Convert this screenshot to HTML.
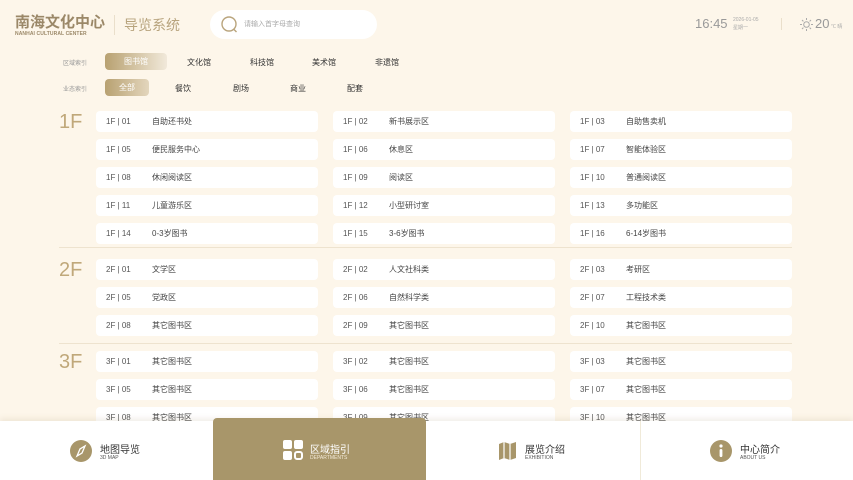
<!DOCTYPE html>
<html><head><meta charset="utf-8"><style>
*{margin:0;padding:0;box-sizing:border-box}
body{width:853px;height:480px;overflow:hidden;background:#fdf6ea;font-family:"Liberation Sans","Noto Sans CJK SC",sans-serif;position:relative;color:#333}
.a{position:absolute}
.card{position:absolute;width:222px;height:21px;background:#fff;border-radius:4px;font-size:8px;color:#444}
.card .c{position:absolute;left:10px;top:6px;color:#555}
.card .n{position:absolute;left:56px;top:5px}
.fl{position:absolute;left:59px;font-size:20px;color:#c0a87a}
.sep{position:absolute;left:59px;width:733px;height:1px;background:#eee3cf}
.tab{position:absolute;font-size:8px;color:#333}
.pill{position:absolute;height:17px;border-radius:4px;color:#fff;font-size:8px;text-align:center;line-height:17px}
</style></head><body>
<div class="a" style="left:15px;top:11px;font-size:15px;font-weight:bold;color:#9b8868">南海文化中心</div>
<div class="a" style="left:15px;top:31px;font-size:5px;font-weight:bold;color:#9b8868;letter-spacing:.1px">NANHAI CULTURAL CENTER</div>
<div class="a" style="left:114px;top:15px;width:1px;height:20px;background:#eadfcb"></div>
<div class="a" style="left:124px;top:15px;font-size:14px;color:#b8a47e">导览系统</div>
<div class="a" style="left:210px;top:10px;width:167px;height:29px;background:#fff;border-radius:15px"></div>
<svg class="a" style="left:220px;top:15px" width="18" height="18"><circle cx="9" cy="9" r="7" fill="none" stroke="#b9a47c" stroke-width="1.4"/><path d="M13.5 14l3 3" stroke="#b9a47c" stroke-width="1.4"/></svg>
<div class="a" style="left:244px;top:19px;font-size:7px;color:#aaa">请输入首字母查询</div>
<div class="a" style="left:695px;top:16px;font-size:13px;color:#999">16:45</div>
<div class="a" style="left:733px;top:17px;font-size:5px;color:#aaa">2026-01-05</div>
<div class="a" style="left:733px;top:24px;font-size:5px;color:#aaa">星期一</div>
<div class="a" style="left:781px;top:18px;width:1px;height:12px;background:#eadfcb"></div>
<svg class="a" style="left:800px;top:18px" width="13" height="13"><circle cx="6.5" cy="6.5" r="2.8" fill="none" stroke="#aaa" stroke-width="1"/><path d="M6.5 0v2M6.5 11v2M0 6.5h2M11 6.5h2M2 2l1.4 1.4M9.6 9.6L11 11M2 11l1.4-1.4M9.6 3.4L11 2" stroke="#aaa" stroke-width="1"/></svg>
<div class="a" style="left:815px;top:16px;font-size:13px;color:#999">20</div>
<div class="a" style="left:831px;top:23px;font-size:5px;color:#aaa">℃ 晴</div>
<div class="a" style="left:63px;top:58px;font-size:6px;color:#999">区域索引</div>
<div class="pill" style="left:105px;top:53px;width:62px;background:linear-gradient(90deg,#b8a171,#f1e9da)">图书馆</div>
<div class="tab" style="left:187px;top:57px">文化馆</div>
<div class="tab" style="left:250px;top:57px">科技馆</div>
<div class="tab" style="left:312px;top:57px">美术馆</div>
<div class="tab" style="left:375px;top:57px">非遗馆</div>
<div class="a" style="left:63px;top:84px;font-size:6px;color:#999">业态索引</div>
<div class="pill" style="left:105px;top:79px;width:44px;background:linear-gradient(90deg,#b8a171,#e3d6bd)">全部</div>
<div class="tab" style="left:175px;top:83px">餐饮</div>
<div class="tab" style="left:233px;top:83px">剧场</div>
<div class="tab" style="left:290px;top:83px">商业</div>
<div class="tab" style="left:347px;top:83px">配套</div>
<div class="fl" style="top:111px">1F</div>
<div class="sep" style="top:247px"></div>
<div class="fl" style="top:259px">2F</div>
<div class="sep" style="top:343px"></div>
<div class="fl" style="top:351px">3F</div>
<div id="cards"></div>
<script>
var d=[[111,"1F","01","自助还书处","02","新书展示区","03","自助售卖机"],[139,"1F","05","便民服务中心","06","休息区","07","智能体验区"],[167,"1F","08","休闲阅读区","09","阅读区","10","普通阅读区"],[195,"1F","11","儿童游乐区","12","小型研讨室","13","多功能区"],[223,"1F","14","0-3岁图书","15","3-6岁图书","16","6-14岁图书"],[259,"2F","01","文学区","02","人文社科类","03","考研区"],[287,"2F","05","党政区","06","自然科学类","07","工程技术类"],[315,"2F","08","其它图书区","09","其它图书区","10","其它图书区"],[351,"3F","01","其它图书区","02","其它图书区","03","其它图书区"],[379,"3F","05","其它图书区","06","其它图书区","07","其它图书区"],[407,"3F","08","其它图书区","09","其它图书区","10","其它图书区"]];
var h="",xs=[96,333,570];
d.forEach(function(r){for(var i=0;i<3;i++)h+='<div class="card" style="left:'+xs[i]+'px;top:'+r[0]+'px"><span class="c">'+r[1]+' | '+r[2+i*2]+'</span><span class="n">'+r[3+i*2]+'</span></div>';});
document.getElementById("cards").innerHTML=h;
</script>
<div class="a" style="left:0;top:421px;width:853px;height:59px;background:#fff;box-shadow:0 -2px 6px rgba(150,130,90,.15)"></div>
<div class="a" style="left:213px;top:418px;width:213px;height:62px;background:#a8966a;border-radius:4px 4px 0 0"></div>
<div class="a" style="left:640px;top:421px;width:1px;height:59px;background:#f0ead9"></div>
<svg class="a" style="left:70px;top:440px" width="22" height="22"><circle cx="11" cy="11" r="11" fill="#a8966a"/><path d="M15 6l-3 7-5 3 3-7z" fill="none" stroke="#fff" stroke-width="1.3"/></svg>
<div class="a" style="left:100px;top:441px;font-size:10px;color:#333">地图导览</div>
<div class="a" style="left:100px;top:455px;font-size:5px;color:#555">3D MAP</div>
<svg class="a" style="left:283px;top:440px" width="21" height="21"><rect x="0" y="0" width="9" height="9" rx="2" fill="#fff"/><rect x="11" y="0" width="9" height="9" rx="2" fill="#fff"/><rect x="0" y="11" width="9" height="9" rx="2" fill="#fff"/><rect x="12" y="12" width="7" height="7" rx="2" fill="none" stroke="#fff" stroke-width="2"/></svg>
<div class="a" style="left:310px;top:441px;font-size:10px;color:#fff">区域指引</div>
<div class="a" style="left:310px;top:455px;font-size:5px;color:#f3ead8">DEPARTMENTS</div>
<svg class="a" style="left:498px;top:441px" width="20" height="20"><path d="M1 3l5-2 6 2 6-2v16l-6 2-6-2-5 2z" fill="#a8966a"/><path d="M6 1v16M12 3v16" stroke="#fff" stroke-width="1.2"/></svg>
<div class="a" style="left:525px;top:441px;font-size:10px;color:#333">展览介绍</div>
<div class="a" style="left:525px;top:455px;font-size:5px;color:#555">EXHIBITION</div>
<svg class="a" style="left:710px;top:440px" width="22" height="22"><circle cx="11" cy="11" r="11" fill="#a8966a"/><circle cx="11" cy="6" r="1.6" fill="#fff"/><rect x="9.6" y="9" width="2.8" height="8" rx="1.4" fill="#fff"/></svg>
<div class="a" style="left:740px;top:441px;font-size:10px;color:#333">中心简介</div>
<div class="a" style="left:740px;top:455px;font-size:5px;color:#555">ABOUT US</div>
</body></html>
